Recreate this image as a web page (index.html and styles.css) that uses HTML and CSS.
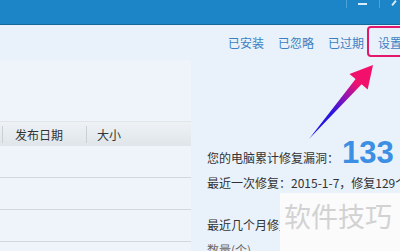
FILE: index.html
```html
<!DOCTYPE html>
<html lang="zh-CN">
<head>
    <meta charset="UTF-8">
    <meta name="viewport" content="width=device-width, initial-scale=1.0">
    <title>漏洞修复</title>
    <link rel="stylesheet" href="styles.css">
</head>
<body>
    <div class="window">
        <div class="titlebar">
            <div class="controls">
                <span class="ctrl ctrl-min"></span>
                <span class="ctrl ctrl-max"></span>
            </div>
        </div>

        <div class="toolbar">
            <a class="link">已安装</a>
            <a class="link">已忽略</a>
            <a class="link">已过期</a>
            <a class="link">设置</a>
        </div>

        <div class="content">
            <div class="table">
                <div class="thead">
                    <span class="th th-date">发布日期</span>
                    <span class="th th-size">大小</span>
                </div>
                <div class="row"></div>
                <div class="row"></div>
                <div class="row"></div>
            </div>

            <div class="summary">
                <div class="stat">
                    <span class="stat-label">您的电脑累计修复漏洞：</span><span class="stat-num">133</span>
                </div>
                <p class="line line-last">最近一次修复：2015-1-7，修复129个漏洞</p>
                <p class="line line-months">最近几个月修复漏洞统计</p>
                <p class="line line-unit">数量(个)</p>
            </div>
        </div>

        <!-- 标注 -->
        <div class="mark"></div>
        <svg class="arrow" width="400" height="251" viewBox="0 0 400 251">
            <defs>
                <linearGradient id="arrowGrad" gradientUnits="userSpaceOnUse" x1="310" y1="138" x2="373" y2="65">
                    <stop offset="0" stop-color="#1a14e6"/>
                    <stop offset="0.35" stop-color="#2a14e0"/>
                    <stop offset="0.55" stop-color="#8a14b8"/>
                    <stop offset="0.75" stop-color="#f0106c"/>
                    <stop offset="1" stop-color="#f5106a"/>
                </linearGradient>
            </defs>
            <polygon fill="url(#arrowGrad)" points="309,139 355.6,79.1 349.5,73.9 373,65 367.7,89.5 361.6,84.3"/>
        </svg>

        <div class="watermark">软件技巧</div>
    </div>
</body>
</html>
```

FILE: styles.css
```css
body {
    margin: 0;
    font-family: 'Noto Sans CJK SC', 'Liberation Sans', sans-serif;
    background: #e9f2fb;
}
.window {
    position: relative;
    width: 400px;
    height: 251px;
    overflow: hidden;
    background: #e9f2fb;
}
.titlebar {
    height: 24px;
    background: #1b85c8;
    border-bottom: 1px solid #17679c;
    display: flex;
    justify-content: flex-end;
}
.controls {
    display: flex;
    height: 8px;
    margin-right: -12px;
}
.ctrl {
    position: relative;
    width: 32px;
    height: 8px;
    border-left: 1px solid #4ea2d8;
}
.ctrl-min::after {
    content: '';
    position: absolute;
    left: 11px;
    top: 3px;
    width: 9px;
    height: 2px;
    background: #d8ecf8;
}
.ctrl-max::after {
    content: '';
    position: absolute;
    left: 13px;
    top: 0;
    width: 2px;
    height: 6px;
    background: #d8ecf8;
    transform: rotate(40deg);
}
.toolbar {
    height: 35px;
    display: flex;
    align-items: center;
    justify-content: flex-end;
    gap: 14px;
    margin-right: -2px;
}
.link {
    font-size: 12px;
    color: #3b7fc2;
    cursor: pointer;
}
.content {
    display: flex;
}
.table {
    flex: 0 0 191px;
    padding-top: 61px;
    background: #eff4fa;
}
.thead {
    height: 25px;
    display: flex;
    align-items: center;
    background: linear-gradient(to bottom, #eef2f5, #dfe5ea);
    border-top: 1px solid #dfe5ea;
    box-sizing: border-box;
}
.th {
    font-size: 12px;
    color: #333;
    border-left: 1px solid #c9d0d6;
    line-height: 17px;
}
.th-date {
    margin-left: 2px;
    padding-left: 12px;
    width: 71px;
}
.th-size {
    padding-left: 10px;
}
.row {
    height: 31px;
    border-bottom: 1px solid #cfd7df;
}
.summary {
    flex: 1;
    min-width: 0;
    overflow: hidden;
    padding: 77px 0 0 16px;
    white-space: nowrap;
}
.stat {
    height: 32px;
    line-height: 32px;
}
.stat-label {
    font-size: 12px;
    color: #333;
}
.stat-num {
    font-family: 'Liberation Sans', sans-serif;
    font-size: 31px;
    font-weight: bold;
    color: #3c8fe2;
    margin-left: 3px;
}
.line {
    margin: 0;
    font-size: 12px;
    color: #333;
    line-height: 20px;
}
.line-last {
    margin-top: 4px;
}
.line-months {
    margin-top: 22px;
}
.line-unit {
    margin-top: 5px;
    color: #666;
}
.mark {
    position: absolute;
    left: 367px;
    top: 26px;
    width: 40px;
    height: 27px;
    border: 2px solid #e3176b;
    border-radius: 4px;
}
.arrow {
    position: absolute;
    left: 0;
    top: 0;
}
.watermark {
    position: absolute;
    left: 280px;
    top: 193px;
    width: 120px;
    height: 58px;
    background: #fbfbfc;
    box-sizing: border-box;
    padding: 5px 0 0 4px;
    font-size: 27px;
    line-height: 36px;
    color: #d2d2d2;
}
```
